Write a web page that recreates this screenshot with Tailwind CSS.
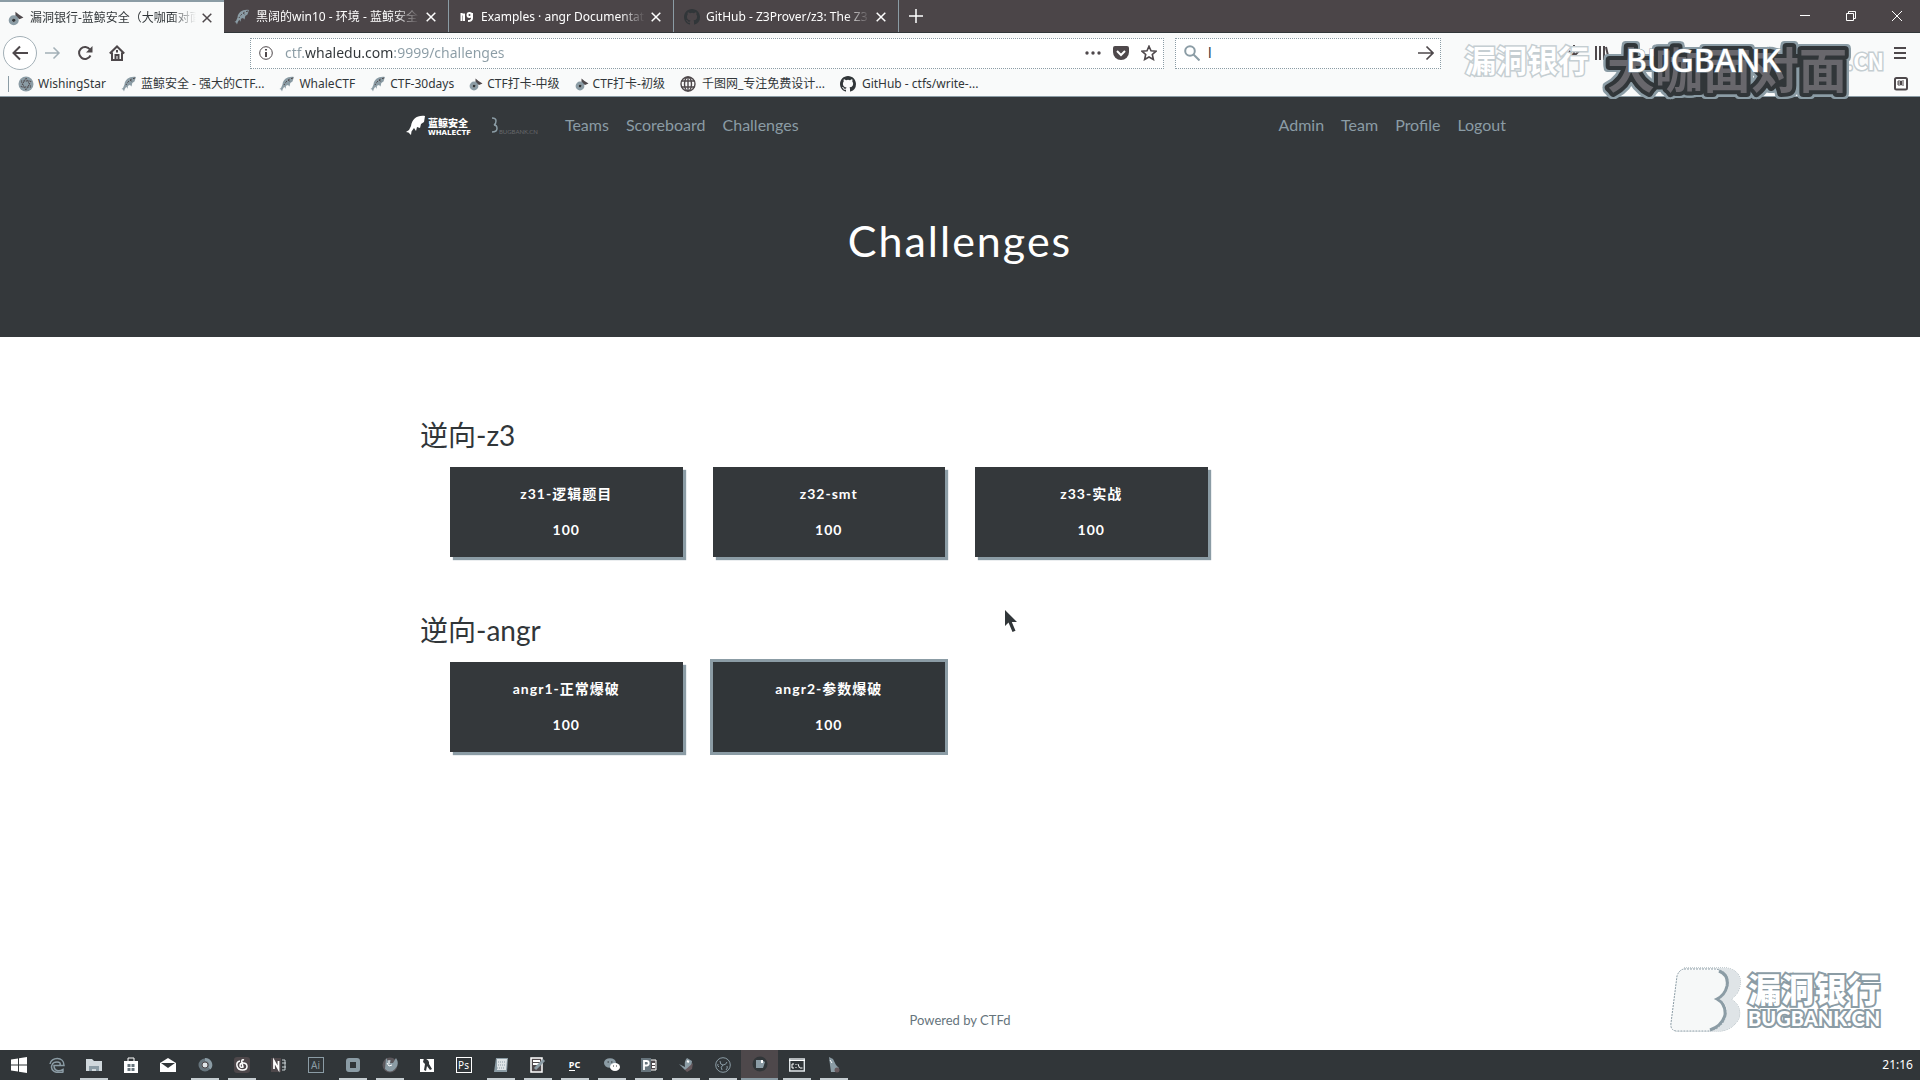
<!DOCTYPE html>
<html lang="zh-CN">
<head>
<meta charset="utf-8">
<title>漏洞银行-蓝鲸安全</title>
<script src="https://cdn.jsdelivr.net/npm/@tailwindcss/browser@4"></script>
</head>
<body class="relative flex min-h-screen flex-col overflow-x-hidden bg-white font-['Lato','Noto_Sans_CJK_SC',sans-serif] text-[#313639]">
<svg class="hidden">
  <symbol id="x" viewBox="0 0 10 10"><path d="M.7.7l8.6 8.6M9.3.7L.7 9.3" fill="none" stroke="currentColor" stroke-width="1.5"/></symbol>
  <symbol id="whale" viewBox="0 0 16 16"><path d="M15 1C9 0 4 3 3.500 8.500L2 12l-1.500 1L2 13.500l1 2 .8-2.500 1.500-2.300 1.200 2 .5-3L9 9l1.500 1.500.8-3.500 2.200-1.500z" fill="#8b9ca5"/><path d="M14 2C10 3 7 5 5 9M9 4l3 2" fill="none" stroke="#4e484b" stroke-dasharray="2 1.500"/></symbol>
  <symbol id="note" viewBox="0 0 14 14"><path d="M6.500 9V1.500l3 2.500L13.500 6.500 10 8 8.500 7v3" fill="#4e484b"/><circle cx="5" cy="9" r="3" fill="none" stroke="#8b9ca5" stroke-width="2.800"/><circle cx="5" cy="9" r="1.500" fill="#313639"/></symbol>
  <symbol id="gh" viewBox="0 0 16 16"><path fill="currentColor" d="M8 0C3.580 0 0 3.580 0 8c0 3.540 2.290 6.530 5.470 7.590.4.070.55-.17.55-.38 0-.19-.01-.82-.01-1.490-2.010.37-2.530-.49-2.690-.94-.09-.23-.48-.94-.82-1.130-.28-.15-.68-.52-.01-.53.63-.01 1.080.58 1.230.82.72 1.210 1.870.87 2.330.66.070-.52.28-.87.51-1.070-1.780-.2-3.640-.89-3.640-3.950 0-.87.31-1.590.82-2.150-.08-.2-.36-1.020.08-2.120 0 0 .67-.21 2.200.82a7.600 7.600 0 0 1 4 0c1.530-1.040 2.200-.82 2.200-.82.44 1.100.16 1.920.08 2.120.51.56.82 1.270.82 2.150 0 3.070-1.870 3.750-3.650 3.950.29.25.54.73.54 1.480 0 1.070-.01 1.930-.01 2.200 0 .21.15.46.55.38A8 8 0 0 0 16 8c0-4.420-3.580-8-8-8z"/></symbol>
</svg>

<header class="bg-[#f9fafa] font-['Noto_Sans','Noto_Sans_CJK_SC',sans-serif] text-xs">
  <!-- tab strip -->
  <div class="flex h-[33px] border-b border-[#313639] bg-[#4b4548] text-white">
    <div class="-mb-px flex w-56 items-center gap-1.5 border-t-2 border-[#8b9ca5] bg-[#f9fafa] px-2 pr-3 text-[#313639]">
      <svg class="size-4 shrink-0"><use href="#note"/></svg>
      <a href="#" class="min-w-0 flex-1 overflow-hidden whitespace-nowrap mask-r-from-85%">漏洞银行-蓝鲸安全（大咖面对面）</a>
      <button aria-label="Close tab" class="text-[#4e484b]"><svg class="size-[10px]"><use href="#x"/></svg></button>
    </div>
    <div class="flex w-[225px] items-center gap-1.5 border-r border-[#8b9ca5] pt-0.5 pr-3 pl-2.5">
      <svg class="size-4 shrink-0"><use href="#whale"/></svg>
      <a href="#" class="min-w-0 flex-1 overflow-hidden whitespace-nowrap mask-r-from-85%">黑阔的win10 - 环境 - 蓝鲸安全</a>
      <button aria-label="Close tab"><svg class="size-[10px]"><use href="#x"/></svg></button>
    </div>
    <div class="flex w-[225px] items-center gap-1.5 border-r border-[#8b9ca5] pt-0.5 pr-3 pl-2.5">
      <svg class="size-4 shrink-0" viewBox="0 0 16 16" fill="none" stroke="#fff" stroke-width="2"><path d="M2.500 12V4M2.500 5.500h2.500V12"/><circle cx="10.500" cy="6" r="2"/><path d="M13 4v5c0 2-1 3-4 3"/></svg>
      <a href="#" class="min-w-0 flex-1 overflow-hidden whitespace-nowrap mask-r-from-85%">Examples · angr Documentation</a>
      <button aria-label="Close tab"><svg class="size-[10px]"><use href="#x"/></svg></button>
    </div>
    <div class="flex w-[225px] items-center gap-1.5 border-r border-[#8b9ca5] pt-0.5 pr-3 pl-2.5">
      <svg class="size-4 shrink-0 text-[#313639]"><use href="#gh"/></svg>
      <a href="#" class="min-w-0 flex-1 overflow-hidden whitespace-nowrap mask-r-from-85%">GitHub - Z3Prover/z3: The Z3 Theorem</a>
      <button aria-label="Close tab"><svg class="size-[10px]"><use href="#x"/></svg></button>
    </div>
    <button aria-label="New tab" class="px-2.5"><svg class="size-3.5" viewBox="0 0 14 14" stroke="#fff" stroke-width="1.500"><path d="M7 0v14M0 7h14"/></svg></button>
    <div class="ml-auto flex">
      <button aria-label="Minimize" class="grid w-[46px] place-items-center"><svg class="size-[10px]" viewBox="0 0 10 10" stroke="#fff"><path d="M0 4.500h10"/></svg></button>
      <button aria-label="Restore" class="grid w-[46px] place-items-center"><svg class="size-[10px]" viewBox="0 0 10 10" stroke="#fff" fill="none"><path d="M.5 2.500h7v7h-7zM2.500 2.500v-2h7v7h-2"/></svg></button>
      <button aria-label="Close" class="grid w-[46px] place-items-center"><svg class="size-[10px]" viewBox="0 0 10 10" stroke="#fff"><path d="M0 0l10 10M10 0L0 10"/></svg></button>
    </div>
  </div>

  <!-- address row -->
  <div class="flex h-10 items-center pr-3.5 pl-[3px]">
    <button aria-label="Back" class="grid size-[34px] place-items-center rounded-full border border-[#a3b0b7] bg-white"><svg class="size-4" viewBox="0 0 16 16" fill="none" stroke="#4e484b" stroke-width="2"><path d="M16 8H1.500M8 1.500L1.500 8 8 14.500"/></svg></button>
    <button aria-label="Forward" class="grid w-8 place-items-center"><svg class="size-4" viewBox="0 0 16 16" fill="none" stroke="#a3b0b7" stroke-width="1.500"><path d="M0 8h14M8.500 2.500L14 8l-5.500 5.500"/></svg></button>
    <button aria-label="Reload" class="grid w-8 place-items-center"><svg class="size-4" viewBox="0 0 16 16" fill="none" stroke="#4e484b" stroke-width="2"><path d="M13.500 10.500A6 6 0 1 1 13 4.500"/><path d="M15.500 1v6.500H9z" fill="#4e484b" stroke="none"/></svg></button>
    <button aria-label="Home" class="grid w-8 place-items-center"><svg class="size-4" viewBox="0 0 16 16" fill="none" stroke="#4e484b" stroke-width="2"><path d="M.8 8.500L8 1.500l7.200 7M3 7.500V15h10V7.500"/><path d="M6.500 15v-5h3v5M8 5v2.500"/></svg></button>
    <div class="ml-[117px] flex h-[31px] flex-1 items-center gap-3 border border-dotted border-[#8b9ca5] bg-white pr-1.5 pl-2">
      <svg class="size-3.5" viewBox="0 0 14 14" fill="none" stroke="#4e484b"><circle cx="7" cy="7" r="6.300"/><path d="M7 6v5M7 3v1.500" stroke-width="2"/></svg>
      <input aria-label="Address" value="ctf.whaledu.com:9999/challenges" class="min-w-0 flex-1 bg-[linear-gradient(90deg,#8b9ca5_20px,#313639_20px,#313639_108px,#8b9ca5_108px)] bg-clip-text text-sm text-transparent outline-none">
      <button aria-label="Page actions"><svg class="h-4 w-4" viewBox="0 0 16 16" fill="#4e484b"><circle cx="2" cy="8" r="1.700"/><circle cx="8" cy="8" r="1.700"/><circle cx="14" cy="8" r="1.700"/></svg></button>
      <button aria-label="Save to Pocket"><svg class="size-4" viewBox="0 0 16 16"><path d="M2 1h12q2 0 2 2v4a8 8 0 0 1-16 0V3q0-2 2-2z" fill="#4e484b"/><path d="M4 6l4 4 4-4" fill="none" stroke="#fff" stroke-width="2"/></svg></button>
      <button aria-label="Bookmark"><svg class="size-4" viewBox="0 0 16 16" fill="none" stroke="#4e484b" stroke-width="1.600"><path d="M8 1.200l2 4.500 5 .5-3.700 3.300 1.100 5L8 12l-4.400 2.500 1.100-5L1 6.200l5-.5z"/></svg></button>
    </div>
    <div class="ml-[11px] flex h-[31px] w-[266px] items-center gap-2 border border-dotted border-[#8b9ca5] bg-white pr-1.5 pl-2">
      <svg class="size-4" viewBox="0 0 16 16" fill="none" stroke="#8b9ca5" stroke-width="2"><circle cx="6" cy="6" r="4.800"/><path d="M9.500 9.500L15.500 15.500"/></svg>
      <input aria-label="Search" value="l" class="min-w-0 flex-1 text-sm outline-none">
      <button aria-label="Go"><svg class="size-4" viewBox="0 0 16 16" fill="none" stroke="#4e484b" stroke-width="1.700"><path d="M0 8h14.500M8.500 1.500L15 8l-6.500 6.500"/></svg></button>
    </div>
    <div class="flex w-[465px] items-center pl-[125px]">
      <button aria-label="Downloads"><svg class="size-4" viewBox="0 0 16 16" fill="none" stroke="#4e484b" stroke-width="2"><path d="M8 0v11M3 6l5 5 5-5M3 15h10"/></svg></button>
      <button aria-label="Library" class="ml-3"><svg class="size-4" viewBox="0 0 16 16" fill="none" stroke="#4e484b" stroke-width="2"><path d="M2 1v14M6 1v14M10 1v14M12 2l3 13"/></svg></button>
      <button aria-label="Menu" class="ml-auto"><svg class="h-4 w-3" viewBox="0 0 12 16" stroke="#4e484b" stroke-width="2"><path d="M0 3h12M0 8h12M0 13h12"/></svg></button>
    </div>
  </div>

  <!-- bookmarks -->
  <nav class="flex h-6 items-center gap-[15px] border-b border-[#8b9ca5] pr-3 pb-0.5 pl-2 whitespace-nowrap">
    <a href="#" class="flex items-center gap-1 border-l border-[#8b9ca5] pl-[9px]"><svg class="size-4" viewBox="0 0 16 16"><circle cx="8" cy="8" r="7.500" fill="#8b9ca5"/><path d="M8 2l5 9H3zM8 14L3 5h10z" fill="none" stroke="#4e484b" stroke-dasharray="1.500 1"/></svg>WishingStar</a>
    <a href="#" class="flex items-center gap-1"><svg class="size-4"><use href="#whale"/></svg>蓝鲸安全 - 强大的CTF...</a>
    <a href="#" class="flex items-center gap-1"><svg class="size-4"><use href="#whale"/></svg>WhaleCTF</a>
    <a href="#" class="flex items-center gap-1"><svg class="size-4"><use href="#whale"/></svg>CTF-30days</a>
    <a href="#" class="flex items-center gap-1"><svg class="size-3.5"><use href="#note"/></svg>CTF打卡-中级</a>
    <a href="#" class="flex items-center gap-1"><svg class="size-3.5"><use href="#note"/></svg>CTF打卡-初级</a>
    <a href="#" class="flex items-center gap-1.5"><svg class="size-4" viewBox="0 0 16 16" fill="none" stroke="#4e484b" stroke-width="1.400"><circle cx="8" cy="8" r="7"/><ellipse cx="8" cy="8" rx="3.500" ry="7"/><path d="M1.500 5h13M1.500 11h13M8 1v14"/></svg>千图网_专注免费设计...</a>
    <a href="#" class="flex items-center gap-1.5"><svg class="size-4"><use href="#gh"/></svg>GitHub - ctfs/write-...</a>
    <button aria-label="Sidebar" class="ml-auto"><svg class="size-3.5" viewBox="0 0 14 14"><rect x="1" y="1" width="12" height="11.500" rx="1.500" fill="#fff" stroke="#4e484b" stroke-width="2"/><path d="M4 4h2.500v4H4zM10 4H7.500v4H10M4 6h6" fill="none" stroke="#4e484b"/></svg></button>
  </nav>
</header>

<section class="h-60 bg-[#34383b]">
  <nav class="mx-auto flex h-14 max-w-[1140px] items-center gap-[17px] px-4 text-[#8b9ca5]">
    <a href="#" class="mr-2.5 flex items-center text-white">
      <svg class="mr-0.5 h-5 w-5" viewBox="0 0 20 20" fill="#fff"><path d="M19 1C11 0 6 4 5 11l-2 4-3 2 2.500.5L5 20l.5-3.500L8 13l2 3 1-4 3 1 1-4 3-2z"/></svg>
      <span class="flex flex-col pt-1"><span class="text-[10px] leading-[11px] font-black">蓝鲸安全</span><span class="font-['DejaVu_Sans',sans-serif] text-[7px] leading-[8px] font-bold">WHALECTF</span></span>
      <svg class="ml-4 h-4 w-3" viewBox="0 0 12 16" fill="none" stroke="#8b9ca5" stroke-width="1.500"><path d="M5 1q4 0 4 3T7 8q3 0 3 3.500T5 15"/></svg>
      <span class="pt-3 text-[6px] text-[#67686c]">BUGBANK.CN</span>
    </a>
    <a href="#">Teams</a><a href="#">Scoreboard</a><a href="#">Challenges</a>
    <a href="#" class="ml-auto">Admin</a><a href="#">Team</a><a href="#">Profile</a><a href="#" class="mr-2">Logout</a>
  </nav>
  <h1 class="pt-16 text-center text-[43px] leading-[48px] tracking-[2px] text-white">Challenges</h1>
</section>

<main class="mx-auto w-full max-w-[1140px] flex-1 px-[30px] pt-20">
  <section class="mb-[55px]">
    <h2 class="text-[28px] leading-9">逆向-z3</h2>
    <div class="mt-[14px] grid grid-cols-4 gap-[30px] px-[30px]">
      <button class="h-[90px] bg-[#34383b] text-sm font-bold tracking-[1px] text-white shadow-[3px_3px_1px_#8b9ca5]"><span class="mb-4 block">z31-逻辑题目</span><span class="block">100</span></button>
      <button class="h-[90px] bg-[#34383b] text-sm font-bold tracking-[1px] text-white shadow-[3px_3px_1px_#8b9ca5]"><span class="mb-4 block">z32-smt</span><span class="block">100</span></button>
      <button class="h-[90px] bg-[#34383b] text-sm font-bold tracking-[1px] text-white shadow-[3px_3px_1px_#8b9ca5]"><span class="mb-4 block">z33-实战</span><span class="block">100</span></button>
    </div>
  </section>
  <section>
    <h2 class="text-[28px] leading-9">逆向-angr</h2>
    <div class="mt-[14px] grid grid-cols-4 gap-[30px] px-[30px]">
      <button class="h-[90px] bg-[#34383b] text-sm font-bold tracking-[1px] text-white shadow-[3px_3px_1px_#8b9ca5]"><span class="mb-4 block">angr1-正常爆破</span><span class="block">100</span></button>
      <button class="h-[90px] bg-[#313639] text-sm font-bold tracking-[1px] text-white ring-3 ring-[#8b9ca5]"><span class="mb-4 block">angr2-参数爆破</span><span class="block">100</span></button>
    </div>
  </section>
</main>

<footer class="pb-5 text-center text-[13px] leading-5 text-[#66747c]"><a href="#">Powered by CTFd</a></footer>

<!-- taskbar: running programs carry a light underline -->
<nav class="flex h-[30px] items-stretch bg-[#313639] font-['Noto_Sans',sans-serif] text-white [&>button]:grid [&>button]:w-[37px] [&>button]:place-items-center [&>button]:bg-bottom [&>button]:bg-no-repeat [&>button]:bg-size-[28px_2px] [&>.run]:bg-[linear-gradient(#c5cdd1,#c5cdd1)]">
  <button aria-label="Start"><svg class="size-4" viewBox="0 0 16 16" fill="#fff"><path d="M0 2.500L7 1.500V7.500H0zM8 1.300L16 0v7.500H8zM0 8.500h7v6L0 13.500zM8 8.500h8V16l-8-1.300z"/></svg></button>
  <button aria-label="Edge" class="ml-px"><svg class="size-4" viewBox="0 0 16 16" fill="none" stroke="#8b9ca5" stroke-width="1.500"><path d="M1 7c1-7 14-8 14 1.500H5C5 14 10 15 14 12.500V15C6 17 1 13 3 8q1-3 5-3t3 3"/></svg></button>
  <button aria-label="Explorer" class="run"><svg class="size-4" viewBox="0 0 16 16"><path d="M0 2h6l2 2h8v10H0z" fill="#d0d8dc"/><path d="M3 14V9h10v5h-3v-2H6v2z" fill="#8b9ca5"/></svg></button>
  <button aria-label="Store"><svg class="size-4" viewBox="0 0 16 16"><path d="M1 4h14v12H1z" fill="#fff"/><path d="M5 4V1h6v3" fill="none" stroke="#fff"/><path d="M4.500 7h3v3h-3zM8.500 7h3v3h-3zM4.500 11h3v3h-3zM8.500 11h3v3h-3z" fill="#66747c"/></svg></button>
  <button aria-label="Mail"><svg class="size-4" viewBox="0 0 16 16"><path d="M0 6l8-5 8 5v9H0z" fill="#fff"/><path d="M1 6h14l-7 5z" fill="#313639"/></svg></button>
  <button aria-label="Chrome" class="run"><svg class="size-4" viewBox="0 0 16 16"><circle cx="8" cy="8" r="6.500" fill="#66747c"/><path d="M8 2.500a5.500 5.500 0 0 1 4.500 9" fill="none" stroke="#8b9ca5" stroke-width="3"/><circle cx="8" cy="8" r="3" fill="#dfe5e8" stroke="#4e484b"/></svg></button>
  <button aria-label="Music" class="run"><svg class="size-4" viewBox="0 0 16 16"><rect width="16" height="16" rx="3" fill="#4e484b"/><path d="M10 3q-3-1-2 3l1 4q-3 1-3-1.500T9 6q4 0 4 3.500T8.500 13 3 9t3-5" fill="none" stroke="#fff" stroke-width="1.500"/></svg></button>
  <button aria-label="OneNote"><svg class="size-4" viewBox="0 0 16 16"><path d="M0 1h10v14H0z" fill="#4e484b"/><path d="M3 12V4l4.500 8V4" fill="none" stroke="#fff" stroke-width="1.800"/><path d="M11 3h3v10h-3M11 6h4M11 10h4" fill="none" stroke="#cbd2d6"/></svg></button>
  <button aria-label="Illustrator"><span class="grid size-4 place-items-center border border-[#8b9ca5] text-[10px] leading-none text-[#8b9ca5]">Ai</span></button>
  <button aria-label="VMware" class="run"><svg class="size-4" viewBox="0 0 16 16" fill="none" stroke="#8b9ca5" stroke-width="4"><rect x="3" y="3" width="10" height="10" rx="1"/></svg></button>
  <button aria-label="Firefox" class="run"><svg class="size-4" viewBox="0 0 16 16"><circle cx="8" cy="8" r="7.500" fill="#5b575b"/><path d="M4 1l2 3 3-1-1 3h3l3-5q4 6-1 11T3 12z" fill="#8b9ca5"/><path d="M5 6l2 3 3-1M7 3v4" stroke="#fff" fill="none"/></svg></button>
  <button aria-label="IDA"><svg class="size-4" viewBox="0 0 16 16"><path d="M1 2h14v13H1z" fill="#fff"/><path d="M5 1q6 2 5 6l3 5-2 1-3-4-1 5-2-1 1-6-2-2z" fill="#313639"/></svg></button>
  <button aria-label="Photoshop"><span class="grid size-4 place-items-center border border-white text-[10px] leading-none">Ps</span></button>
  <button aria-label="Notepad" class="run"><svg class="size-4" viewBox="0 0 16 16"><path d="M3 1h12l-1 14H1z" fill="#8b9ca5"/><path d="M4 2h10l-1 11H4z" fill="#dfe5e8"/><path d="M5 5h8M5 8h8M4 11h8" stroke="#8b9ca5" stroke-dasharray="1 1"/></svg></button>
  <button aria-label="Editor" class="run"><svg class="size-4" viewBox="0 0 16 16"><path d="M1 1h11v14H1z" fill="#4e484b" stroke="#fff" stroke-width="1.500"/><path d="M3 4h7M3 7h6" stroke="#fff" stroke-width="2"/><path d="M5 12l9-9" stroke="#8b9ca5" stroke-width="3"/></svg></button>
  <button aria-label="PyCharm" class="run"><span class="grid text-[9px] leading-[11px] font-bold">PC<i class="h-px w-1.5 bg-white"></i></span></button>
  <button aria-label="WeChat" class="run"><svg class="size-4" viewBox="0 0 16 16"><ellipse cx="6" cy="6" rx="6" ry="4.800" fill="#8b9ca5"/><ellipse cx="11" cy="10" rx="5" ry="4" fill="#fff"/><path d="M3.500 5h1.500M7 5h1.500M9 9h1M12 9h1" stroke="#313639"/></svg></button>
  <button aria-label="PowerPoint" class="run"><svg class="size-4" viewBox="0 0 16 16"><path d="M8 3h7v10H8z" fill="#4e484b" stroke="#fff"/><path d="M0 1h10v14H0z" fill="#66747c"/><path d="M3 13V4h2.500a2 2 0 0 1 0 4.500H3M11 7h3M11 10h3" fill="none" stroke="#fff" stroke-width="1.800"/></svg></button>
  <button aria-label="Bird" class="run"><svg class="size-4" viewBox="0 0 16 16"><path d="M1 7l6 3q-1-6 2-9l5 3q0 8-7 9z" fill="#8b9ca5"/><path d="M7 13l8-7-1 6-5 3z" fill="#66595d"/><path d="M9 4l2 1" stroke="#fff" stroke-width="2"/></svg></button>
  <button aria-label="OBS" class="run"><svg class="size-4" viewBox="0 0 16 16" fill="none" stroke="#8b9ca5"><circle cx="8" cy="8" r="7.300"/><path d="M5 4q0 4 3 4t4-3M8 8q-3 2-1 5M4 10q-2-1-1-3M12 9q1 2-1 4"/></svg></button>
  <button aria-label="Recorder" class="border-b-2 border-[#8b9ca5] bg-[#4e484b]"><svg class="size-4" viewBox="0 0 16 16"><circle cx="8" cy="8" r="7.500" fill="#313639"/><path d="M4 4h6l3 2-2 6H4z" fill="#8b9ca5"/><path d="M9 4h2v3H9z" fill="#fff"/></svg></button>
  <button aria-label="Command prompt" class="run"><svg class="size-4" viewBox="0 0 16 16"><path d="M.7 2h14.600v12H.7z" fill="none" stroke="#dfe5e8" stroke-width="1.400"/><path d="M0 3.500h16" stroke="#fff"/><path d="M5 7H3v4h2M7 7v1M7 10v1M9 7l1.500 4M11 11h2.500" fill="none" stroke="#fff"/></svg></button>
  <button aria-label="Launcher" class="run"><svg class="size-4" viewBox="0 0 16 16"><path d="M3 0l4 2 3 6 3 3-1 4H5L4 8z" fill="#8b9ca5"/><circle cx="11" cy="13" r="2.500" fill="#66595d"/><path d="M4 3l2 3" stroke="#fff"/></svg></button>
  <time class="ml-auto self-center pr-[7px] text-xs">21:16</time>
</nav>

<!-- stream overlay marks -->
<svg class="pointer-events-none absolute top-9 right-8 h-16 w-[430px]" viewBox="0 0 430 64" font-family="Noto Sans CJK SC, sans-serif" font-weight="700" paint-order="stroke">
  <text x="7" y="36" font-size="31" fill="#fff" stroke="#c5ced2" stroke-width="3">漏洞银行</text>
  <text x="388" y="34" font-size="22" fill="#fff" stroke="#c5ced2" stroke-width="3">.CN</text>
  <text class="[filter:drop-shadow(2px_0_#8b9ca5)_drop-shadow(-2px_0_#8b9ca5)_drop-shadow(0_2px_#8b9ca5)_drop-shadow(0_-2px_#8b9ca5)]" x="149" y="52" font-size="48" fill="#68676c" stroke="#313639" stroke-width="8" stroke-linejoin="round">大咖面对面</text>
  <text x="168" y="36" font-size="32" font-weight="500" font-family="Noto Sans, sans-serif" fill="#fff" stroke="#8b9ca5" stroke-width="1">BUGBANK</text>
</svg>
<svg class="pointer-events-none absolute right-9 bottom-[46px] h-[68px] w-[216px]" viewBox="0 0 216 68" font-weight="900" stroke="#8b9ca5" paint-order="stroke">
  <path d="M16 2h43q15 3 13 17-1 9-9 14 11 7 8 19-5 11-18 13H8" fill="#dfe4e7" stroke-dasharray="1 1"/>
  <path d="M16 4h31q13 2 12 14-1 10-10 15 10 5 8 16-3 13-16 15H8q-6-1-5-8L9 11q2-6 7-7z" fill="#f6f8f8" stroke="#fff" stroke-width="3"/>
  <path d="M16 3h31q14 2 13 15-1 10-11 15 10 5 9 16-3 14-17 16H8q-6-1-5-8L9 10q2-6 7-7z" fill="none" stroke-dasharray="2 1"/>
  <path d="M51 5q10 4 8 15-2 9-10 13 9 5 8 16-3 11-15 15" fill="none" stroke-width="3"/>
  <text x="80" y="36" font-size="33" font-family="Noto Sans CJK SC, sans-serif" fill="#fff" stroke-width="4">漏洞银行</text>
  <text x="80" y="60" font-size="20" font-family="Lato, sans-serif" fill="#fff" stroke-width="4">BUGBANK.CN</text>
</svg>
<svg class="pointer-events-none absolute top-[610px] left-[1005px] h-[22px] w-3" viewBox="0 0 12 22"><path d="M0 0v16l3.500-3.500L7.500 22l3-1.200L6.800 12H12z" fill="#313639"/></svg>
</body>
</html>
